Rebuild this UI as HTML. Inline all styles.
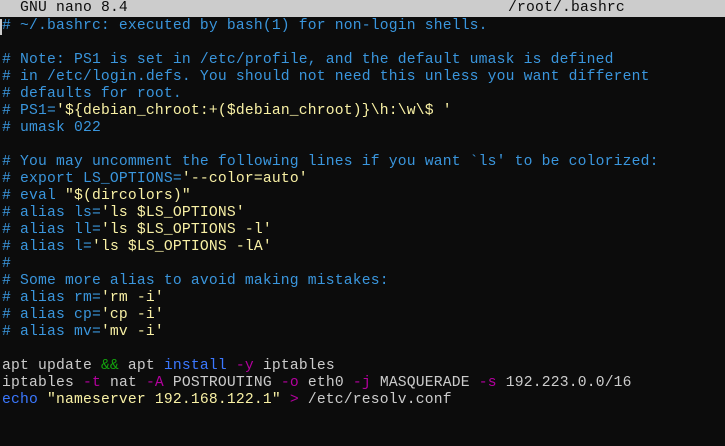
<!DOCTYPE html>
<html><head><meta charset="utf-8"><style>
html,body{margin:0;padding:0;background:#0c0c0c;width:725px;height:446px;overflow:hidden}
body{font-family:"Liberation Mono",monospace;font-size:14.7px;color:#cccccc;letter-spacing:0.18px}
.tb{position:absolute;left:0;top:0;width:725px;height:17px;background:#cccccc;color:#0c0c0c}
.tb span{position:absolute;top:0;line-height:17px;white-space:pre}
pre{position:absolute;left:2px;top:18px;margin:0;font:inherit;line-height:17px;white-space:pre}
.c{color:#3a96dd}.y{color:#f9f1a5}.g{color:#13a10e}.m{color:#b4009e}.b{color:#3b78ff}
.cur{position:absolute;left:0;top:19px;width:2px;height:16px;background:#cccccc}
</style></head><body>
<div class="tb"><span style="left:20px">GNU nano 8.4</span><span style="left:508px">/root/.bashrc</span></div>
<div class="cur"></div>
<pre><span class="c"># ~/.bashrc: executed by bash(1) for non-login shells.</span>

<span class="c"># Note: PS1 is set in /etc/profile, and the default umask is defined</span>
<span class="c"># in /etc/login.defs. You should not need this unless you want different</span>
<span class="c"># defaults for root.</span>
<span class="c"># PS1=</span><span class="y">'${debian_chroot:+($debian_chroot)}\h:\w\$ '</span>
<span class="c"># umask 022</span>

<span class="c"># You may uncomment the following lines if you want `ls' to be colorized:</span>
<span class="c"># export LS_OPTIONS=</span><span class="y">'--color=auto'</span>
<span class="c"># eval </span><span class="y">"$(dircolors)"</span>
<span class="c"># alias ls=</span><span class="y">'ls $LS_OPTIONS'</span>
<span class="c"># alias ll=</span><span class="y">'ls $LS_OPTIONS -l'</span>
<span class="c"># alias l=</span><span class="y">'ls $LS_OPTIONS -lA'</span>
<span class="c">#</span>
<span class="c"># Some more alias to avoid making mistakes:</span>
<span class="c"># alias rm=</span><span class="y">'rm -i'</span>
<span class="c"># alias cp=</span><span class="y">'cp -i'</span>
<span class="c"># alias mv=</span><span class="y">'mv -i'</span>

apt update <span class="g">&amp;&amp;</span> apt <span class="b">install</span> <span class="m">-y</span> iptables
iptables <span class="m">-t</span> nat <span class="m">-A</span> POSTROUTING <span class="m">-o</span> eth0 <span class="m">-j</span> MASQUERADE <span class="m">-s</span> 192.223.0.0/16
<span class="b">echo</span> <span class="y">"nameserver 192.168.122.1"</span> <span class="m">&gt;</span> /etc/resolv.conf</pre>
</body></html>
